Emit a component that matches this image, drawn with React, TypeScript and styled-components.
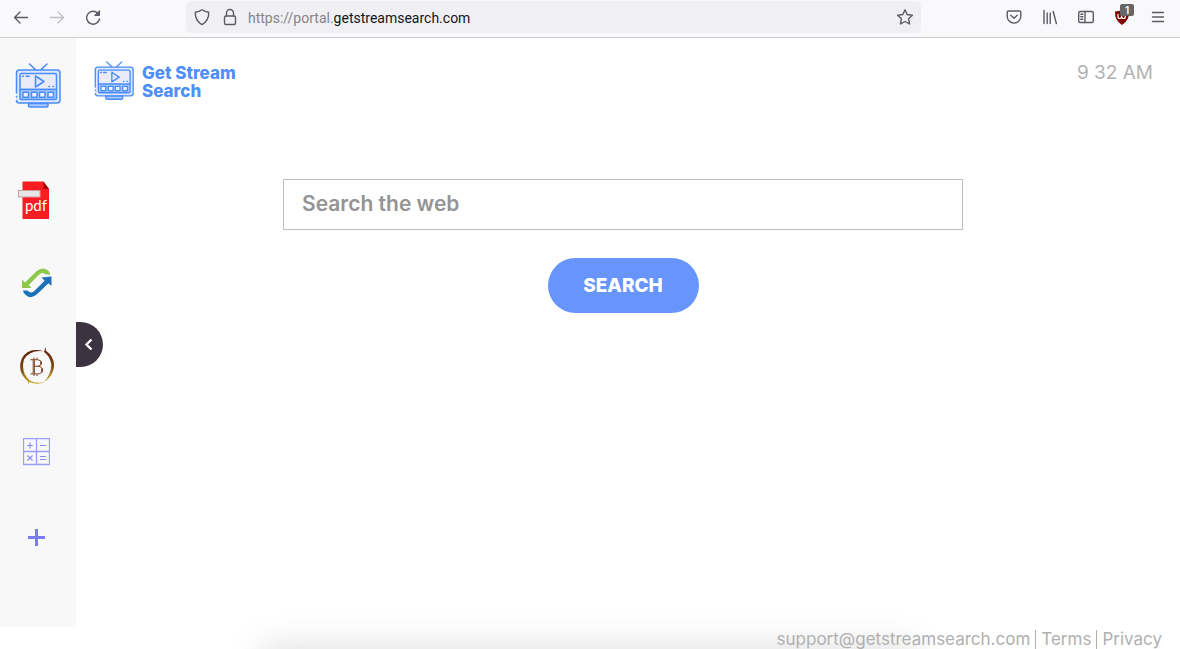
import React, { useState } from "react";
import styled, { createGlobalStyle } from "styled-components";

const GlobalStyle = createGlobalStyle`
  *, *::before, *::after { box-sizing: border-box; }
  html, body { margin: 0; padding: 0; }
  body { background: #fff; font-family: Inter, "Liberation Sans", sans-serif; }
  button, input { font-family: inherit; }
`;

const Window = styled.div`
  display: flex;
  flex-direction: column;
  height: 100vh;
  overflow: hidden;
`;

const Toolbar = styled.header`
  display: flex;
  gap: 75px;
  padding: 1px 4px 4px 3px;
  background: #f9f9fb;
  border-bottom: 1px solid #cccccf;
`;

const ToolGroup = styled.div`
  display: flex;
`;

const ToolButton = styled.button<{ $narrow?: boolean }>`
  position: relative;
  display: flex;
  flex: none;
  align-items: center;
  justify-content: center;
  width: ${(p) => (p.$narrow ? 28 : 36)}px;
  height: 32px;
  padding: 0;
  border: 0;
  background: none;
  color: #5b5b66;
  &:disabled { color: #bfbfc5; }
`;

const AddressBar = styled.div`
  display: flex;
  flex: 1;
  min-width: 0;
  align-items: center;
  padding: 0 2px;
  border-radius: 5px;
  background: #f0f0f4;
  font-family: Roboto, "Liberation Sans", sans-serif;
  font-size: 14px;
  line-height: 20px;
`;

const AddressPrefix = styled.label`
  margin-left: 4px;
  padding-top: 2px;
  color: #84848a;
`;

const AddressInput = styled.input`
  flex: 1;
  min-width: 0;
  padding: 2px 0 0;
  border: 0;
  outline: 0;
  background: none;
  color: #15141a;
  font-size: 14px;
  line-height: 20px;
`;

const Badge = styled.span`
  position: absolute;
  top: 3px;
  left: 16px;
  width: 14px;
  height: 12px;
  border-radius: 2px;
  background: #666;
  color: #fff;
  font-size: 10px;
  font-weight: 600;
  line-height: 12px;
  text-align: center;
`;

const Body = styled.div`
  position: relative;
  display: flex;
  flex: 1;
  min-height: 0;
`;

const Sidebar = styled.nav`
  display: flex;
  flex: none;
  flex-direction: column;
  align-items: center;
  width: 76px;
  padding-top: 25px;
  background: #f8f8f8;
`;

const SidebarLogo = styled.a`
  display: block;
  height: 46px;
  margin-bottom: 49px;
  svg { display: block; }
`;

const AppLink = styled.a`
  display: flex;
  align-items: center;
  justify-content: center;
  width: 73px;
  height: 84px;
  margin-right: 3px;
`;

const Collapse = styled.button`
  position: absolute;
  top: 284px;
  left: 76px;
  display: flex;
  align-items: center;
  justify-content: center;
  width: 27px;
  height: 45px;
  padding: 0 2px 0 0;
  border: 0;
  border-radius: 0 23px 23px 0;
  background: #3c3341;
`;

const Main = styled.main`
  display: flex;
  flex: 1;
  flex-direction: column;
  min-width: 0;
`;

const TopRow = styled.div`
  display: flex;
  align-items: flex-start;
  justify-content: space-between;
  padding: 23px 27px 0 18px;
`;

const Brand = styled.a`
  display: flex;
  gap: 8px;
  color: #4f8ffb;
  font-size: 17px;
  font-weight: 800;
  line-height: 18px;
  text-decoration: none;
`;

const BrandName = styled.span`
  display: flex;
  flex-direction: column;
  height: 40px;
  padding-top: 3px;
`;

const Clock = styled.time`
  color: #b2b2b2;
  font-size: 19px;
  line-height: 24px;
`;

const SearchForm = styled.form`
  display: flex;
  flex-direction: column;
  align-items: center;
  gap: 28px;
  padding: 78px 10px 0 0;
`;

const SearchInput = styled.input`
  width: 100%;
  max-width: 680px;
  height: 51px;
  padding: 0 18px 2px;
  border: 1px solid #bfbfbf;
  outline: 0;
  background: #fff;
  color: #555;
  font-size: 21px;
  font-weight: 600;
  &::placeholder { color: #949494; opacity: 1; }
`;

const SearchButton = styled.button`
  width: 151px;
  height: 55px;
  padding: 0 0 1px;
  border: 0;
  border-radius: 28px;
  background: #6795fd;
  color: #fff;
  font-size: 19px;
  font-weight: 800;
`;

const Footer = styled.footer`
  position: relative;
  display: flex;
  flex: none;
  justify-content: flex-end;
  height: 22px;
  padding: 3px 13px 0 0;
`;

const FooterLink = styled.a`
  position: relative;
  flex: none;
  height: 24px;
  padding: 0 5px;
  color: #b0b0b0;
  font-size: 17px;
  line-height: 19px;
  text-decoration: none;
  & + & { border-left: 1px solid #b0b0b0; }
`;

const BottomShadow = styled.div`
  position: absolute;
  top: 32px;
  left: 23%;
  right: 23%;
  height: 40px;
  box-shadow: 0 0 40px 8px rgba(0, 0, 0, 0.16);
`;

const stroke = {
  fill: "none",
  stroke: "currentColor",
  strokeWidth: 1.4,
  strokeLinecap: "round" as const,
  strokeLinejoin: "round" as const,
};

const ToolIcon = ({ children }: { children: React.ReactNode }) => (
  <svg width="18" height="18" viewBox="0 0 18 18" aria-hidden="true" {...stroke}>
    {children}
  </svg>
);

const TvIcon = ({ size }: { size: number }) => (
  <svg width={size} height={size} viewBox="0 0 46 46" fill="none" stroke="#4a8cfb" strokeWidth="1.5" strokeLinecap="round" strokeLinejoin="round" aria-hidden="true">
    <path d="M14.500 1l6 5.600M32 1l-6 5.600" />
    <rect x="1.500" y="7" width="43.500" height="33" rx="3" fill="#dce8ff" stroke="none" />
    <path d="M1.500 30V10q0-3 3-3h37.500q3 0 3 3v27q0 3-3 3H4.500q-3 0-3-2.500M1.500 33.500v.4" />
    <path d="M5 26.500V12q0-1.500 1.500-1.500h33.500q1.500 0 1.500 1.500v14.500z" fill="#e9ebf9" />
    <path d="M5 26.500h36.500V35q0 1.500-1.500 1.500H6.500q-1.500 0-1.500-1.500z" fill="#a9c9ff" />
    <path d="M20.500 13v11l8.500-5.500z" fill="#dde5fc" />
    <path d="M7.500 13.200h1M11 13.200h3.200M34 23.500h.6M38 23.500h.6" />
    <g fill="#eef3ff">
      <rect x="8" y="29.200" width="5.500" height="5" />
      <rect x="16.500" y="29.200" width="5.500" height="5" />
      <rect x="24.500" y="29.200" width="5.500" height="5" />
      <rect x="33" y="29.200" width="5.500" height="5" />
    </g>
    <path d="M13.500 40.500h19.500v2q0 1.500-1.500 1.500h-16.500q-1.500 0-1.500-1.500z" fill="#a9c9ff" />
  </svg>
);

const PdfIcon = () => (
  <svg width="40" height="40" viewBox="0 0 40 40" aria-hidden="true">
    <path d="M5.500 1.500h21l5.500 7.500v30h-26.500z" fill="#f91c20" />
    <path d="M26.500 1.500l5.500 7.500h-5.500z" fill="#a50508" />
    <rect x="1.500" y="10.500" width="21.500" height="6.500" fill="#e6e6e6" stroke="#cf9c9e" />
    <text x="19" y="31" textAnchor="middle" fill="#fff" fontFamily="Lato, sans-serif" fontSize="15">pdf</text>
  </svg>
);

const ConvertIcon = () => (
  <svg width="30" height="32" viewBox="0 0 30 32" aria-hidden="true">
    <path d="M0 11.500L3 14.400L14.500 3.300Q20.500-2 26 2.600Q28 4.400 28.300 6.500H24Q20.500 3.400 17.200 6.600L6.800 17L9.500 20H0Z" fill="#8cc84b" />
    <path d="M29.500 18L26.500 15.200L15 26.300Q9 31.500 4 27.200Q1.200 25 1 22.500H5.400Q9 26.200 12.300 23L22.600 12.700L19.500 9.600L29.500 8.600Z" fill="#1c71b8" />
  </svg>
);

const BitcoinIcon = () => (
  <svg width="36" height="42" viewBox="0 1 36 42" aria-hidden="true">
    <defs>
      <linearGradient id="coin" x1="0" y1="0" x2="0" y2="1">
        <stop offset="0" stopColor="#5d1d0c" />
        <stop offset="0.550" stopColor="#7d4a12" />
        <stop offset="1" stopColor="#d3b42c" />
      </linearGradient>
    </defs>
    <path d="M25 5.200Q9 .5 2.800 12.500Q-2.500 26 9 35.500V39L10.300 36Q18 39.500 26 36Q17 38.200 10.500 34.200Q1.500 26 5 13.500Q10.500 3.500 25 5.200Z" fill="url(#coin)" />
    <path d="M26.500 1L26.800 4.500Q37.500 12.500 34.300 24Q32 32 25 36Q32.500 27.500 32.300 18.500Q31 10 25 6Z" fill="url(#coin)" />
    <g fill="none" stroke="#7c4522" strokeWidth="1">
      <path d="M11.500 13.700h7q4 .3 4 3.300q0 3-4 3.300h-3M18.500 20.300q5 .3 5 3.800q0 3.600-5 3.800h-7" />
      <path d="M14.200 13.700v14M15.400 13.700v14M15 11.600v2M18 11.600v2M15 28v2M18 28v2" />
      <path d="M22 15.500v3M23 22.300v4" strokeWidth="1.600" />
    </g>
  </svg>
);

const CalculatorIcon = () => (
  <svg width="27" height="29" viewBox="0 0 27 29" fill="none" stroke="#8d8dfa" aria-hidden="true">
    <path d="M.5.5h26v26H.5zM13.500.5v26M.5 13.500h26" stroke="#9c9cfb" strokeWidth="1.300" />
    <path d="M4 7.500h6M7 4.500v6M17 7.500h6M4.500 17.500l5 5M9.500 17.500l-5 5M17 18.500h6M17 21.500h6" strokeWidth="1.200" />
  </svg>
);

const PlusIcon = () => (
  <svg width="18" height="20" viewBox="0 0 18 20" aria-hidden="true">
    <path d="M0 10h17v3H0zM7 3h3v17H7z" fill="#7b7bfa" />
  </svg>
);

const apps = [
  { name: "PDF converter", icon: <PdfIcon /> },
  { name: "File converter", icon: <ConvertIcon /> },
  { name: "Bitcoin", icon: <BitcoinIcon /> },
  { name: "Calculator", icon: <CalculatorIcon /> },
  { name: "Add an app", icon: <PlusIcon /> },
];

export default function App() {
  const [query, setQuery] = useState("");
  const [address, setAddress] = useState("getstreamsearch.com");

  return (
    <Window>
      <GlobalStyle />
      <Toolbar>
        <ToolGroup>
          <ToolButton aria-label="Back">
            <ToolIcon><path d="M15.500 9.500h-13M8 4L2.500 9.500L8 15" /></ToolIcon>
          </ToolButton>
          <ToolButton aria-label="Forward" disabled>
            <ToolIcon><path d="M2.500 9.500h13M10 4l5.500 5.500L10 15" /></ToolIcon>
          </ToolButton>
          <ToolButton aria-label="Reload">
            <ToolIcon>
              <path d="M13.800 5.200A6.500 6.500 0 1 0 15.500 11" />
              <path d="M15.500 3v4.500H11z" fill="currentColor" strokeWidth="1" />
            </ToolIcon>
          </ToolButton>
        </ToolGroup>

        <AddressBar>
          <ToolButton $narrow aria-label="Tracking protection">
            <ToolIcon><path d="M9 1.700q2.800 2 6.700 2.500q.5 8-6.700 12.500Q1.800 12.200 2.300 4.200Q6.200 3.700 9 1.700z" /></ToolIcon>
          </ToolButton>
          <ToolButton $narrow aria-label="Site information">
            <ToolIcon>
              <rect x="3.500" y="8" width="11" height="8.500" rx="1.500" />
              <path d="M5.500 8V5a3.500 3.500 0 0 1 7 0v3" />
            </ToolIcon>
          </ToolButton>
          <AddressPrefix htmlFor="address">https://portal.</AddressPrefix>
          <AddressInput id="address" value={address} onChange={(e) => setAddress(e.target.value)} />
          <ToolButton $narrow aria-label="Bookmark this page">
            <ToolIcon><path d="M9 1.800l2.200 4.700l5.200.7l-3.800 3.600l1 5.200L9 13.500L4.400 16l1-5.200L1.600 7.200l5.200-.7z" /></ToolIcon>
          </ToolButton>
        </AddressBar>

        <ToolGroup>
          <ToolButton aria-label="Save to Pocket">
            <ToolIcon>
              <path d="M3.500 3h11q1.300 0 1.300 1.300v4a6.800 6.800 0 0 1-13.600 0v-4Q2.200 3 3.500 3z" />
              <path d="M5.800 7.200L9 10.200l3.200-3" />
            </ToolIcon>
          </ToolButton>
          <ToolButton aria-label="Library">
            <ToolIcon><path d="M3 2.500v13M6.200 5v10.500M9.200 5v10.500M12.200 3.500l3.200 12" /></ToolIcon>
          </ToolButton>
          <ToolButton aria-label="Sidebars">
            <ToolIcon>
              <rect x="1.700" y="3.500" width="14.600" height="11" rx="1.500" />
              <path d="M8 3.500v11M3.800 6.300h2M3.800 8.800h2M3.800 11.300h2" />
            </ToolIcon>
          </ToolButton>
          <ToolButton aria-label="uBlock Origin, 1 blocked">
            <svg width="18" height="18" viewBox="0 0 18 18" aria-hidden="true">
              <path d="M9 1.500q2.500 1.800 7 2q.5 9-7 13.500q-7.500-4.500-7-13.500q4.500-.2 7-2z" fill="#800000" />
              <path d="M5 6v2.500q0 2 1.800 2T8.600 8.500V6M8.600 8.500q0 2 1.900 2t1.900-2t-1.900-2" fill="none" stroke="#fff" strokeWidth="1.200" />
            </svg>
            <Badge>1</Badge>
          </ToolButton>
          <ToolButton aria-label="Menu">
            <ToolIcon><path d="M3.500 4.500h11M3.500 9h11M3.500 13.500h11" /></ToolIcon>
          </ToolButton>
        </ToolGroup>
      </Toolbar>

      <Body>
        <Sidebar aria-label="Apps">
          <SidebarLogo href="#" aria-label="Home"><TvIcon size={46} /></SidebarLogo>
          {apps.map((app) => (
            <AppLink key={app.name} href="#" aria-label={app.name}>{app.icon}</AppLink>
          ))}
        </Sidebar>
        <Main>
          <TopRow>
            <Brand href="#">
              <TvIcon size={40} />
              <BrandName>
                <span>Get Stream</span>
                <span>Search</span>
              </BrandName>
            </Brand>
            <Clock>9 32 AM</Clock>
          </TopRow>
          <SearchForm onSubmit={(e) => e.preventDefault()}>
            <SearchInput
              aria-label="Search the web"
              placeholder="Search the web"
              value={query}
              onChange={(e) => setQuery(e.target.value)}
            />
            <SearchButton type="submit">SEARCH</SearchButton>
          </SearchForm>
        </Main>
        <Collapse aria-label="Collapse sidebar">
          <svg width="9" height="13" viewBox="0 0 9 13" fill="none" stroke="#fff" strokeWidth="2.400" aria-hidden="true">
            <path d="M7.500 1.500l-5 5l5 5" />
          </svg>
        </Collapse>
      </Body>

      <Footer>
        <BottomShadow />
        <FooterLink href="mailto:support@getstreamsearch.com">support@getstreamsearch.com</FooterLink>
        <FooterLink href="#">Terms</FooterLink>
        <FooterLink href="#">Privacy</FooterLink>
      </Footer>
    </Window>
  );
}
